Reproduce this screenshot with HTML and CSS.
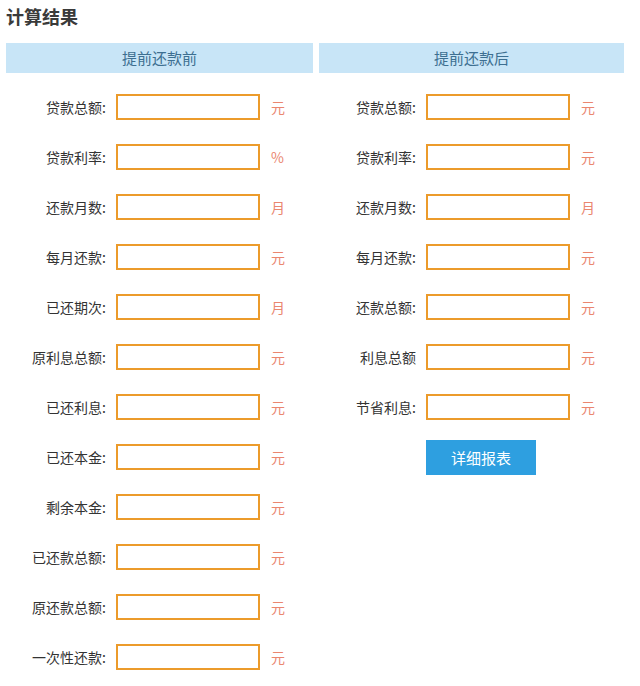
FILE: index.html
```html
<!DOCTYPE html>
<html lang="zh-CN">
<head>
    <meta charset="UTF-8">
    <meta name="viewport" content="width=device-width, initial-scale=1.0">
    <title>计算结果</title>
    <link rel="stylesheet" href="styles.css">
</head>
<body>
    <div class="container">
        <h2 class="title">计算结果</h2>

        <div class="result">
            <div class="result-col">
                <div class="col-head">提前还款前</div>
                <div class="rows">
                    <div class="row"><label>贷款总额:</label><input type="text"><span class="unit">元</span></div>
                    <div class="row"><label>贷款利率:</label><input type="text"><span class="unit">%</span></div>
                    <div class="row"><label>还款月数:</label><input type="text"><span class="unit">月</span></div>
                    <div class="row"><label>每月还款:</label><input type="text"><span class="unit">元</span></div>
                    <div class="row"><label>已还期次:</label><input type="text"><span class="unit">月</span></div>
                    <div class="row"><label>原利息总额:</label><input type="text"><span class="unit">元</span></div>
                    <div class="row"><label>已还利息:</label><input type="text"><span class="unit">元</span></div>
                    <div class="row"><label>已还本金:</label><input type="text"><span class="unit">元</span></div>
                    <div class="row"><label>剩余本金:</label><input type="text"><span class="unit">元</span></div>
                    <div class="row"><label>已还款总额:</label><input type="text"><span class="unit">元</span></div>
                    <div class="row"><label>原还款总额:</label><input type="text"><span class="unit">元</span></div>
                    <div class="row"><label>一次性还款:</label><input type="text"><span class="unit">元</span></div>
                </div>
            </div>

            <div class="result-col result-col--after">
                <div class="col-head">提前还款后</div>
                <div class="rows">
                    <div class="row"><label>贷款总额:</label><input type="text"><span class="unit">元</span></div>
                    <div class="row"><label>贷款利率:</label><input type="text"><span class="unit">元</span></div>
                    <div class="row"><label>还款月数:</label><input type="text"><span class="unit">月</span></div>
                    <div class="row"><label>每月还款:</label><input type="text"><span class="unit">元</span></div>
                    <div class="row"><label>还款总额:</label><input type="text"><span class="unit">元</span></div>
                    <div class="row"><label>利息总额</label><input type="text"><span class="unit">元</span></div>
                    <div class="row"><label>节省利息:</label><input type="text"><span class="unit">元</span></div>
                </div>
                <button class="btn-report">详细报表</button>
            </div>
        </div>
    </div>
</body>
</html>
```

FILE: styles.css
```css
:root {
    --text-color: #333;
    --head-bg: #c8e5f7;
    --head-text: #3d6f91;
    --input-border: #ec9b2b;
    --unit-color: #ea866f;
    --btn-color: #2e9fe0;
}

body {
    font-family: "Microsoft YaHei", "Noto Sans CJK SC", sans-serif;
    color: var(--text-color);
    background: #fff;
    margin: 0;
    padding: 0;
}

.container {
    padding: 0 6px;
    width: 618px;
}

.title {
    font-size: 18px;
    font-weight: bold;
    line-height: 24px;
    margin: 4px 0 15px;
    color: #3a3a3a;
}

.result {
    display: flex;
    gap: 6px;
}

.result-col {
    width: 307px;
}

.result-col--after {
    width: 305px;
}

.col-head {
    background: var(--head-bg);
    color: var(--head-text);
    text-align: center;
    font-size: 15px;
    height: 30px;
    line-height: 30px;
}

.rows {
    padding-top: 9px;
}

.row {
    display: flex;
    align-items: center;
    height: 50px;
}

.row label {
    width: 100px;
    text-align: right;
    font-size: 14px;
    margin-right: 10px;
}

.result-col--after .row label {
    width: 97px;
}

.row input {
    box-sizing: border-box;
    width: 144px;
    height: 26px;
    border: 2px solid var(--input-border);
    padding: 0 4px;
    margin: 0;
    outline: none;
}

.unit {
    margin-left: 11px;
    font-size: 14px;
    color: var(--unit-color);
}

.btn-report {
    display: block;
    margin: 8px 0 0 107px;
    width: 110px;
    height: 35px;
    border: none;
    background: var(--btn-color);
    color: #fff;
    font-family: inherit;
    font-size: 15px;
    cursor: pointer;
}
```
